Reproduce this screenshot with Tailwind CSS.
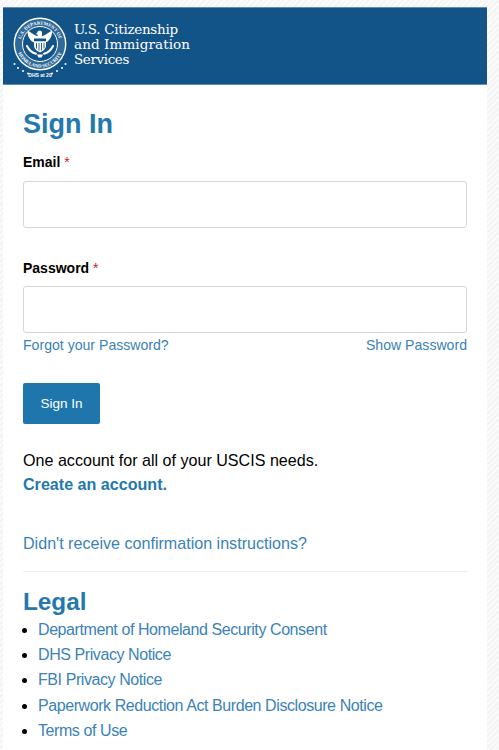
<!DOCTYPE html>
<html lang="en">

<head>
    <meta charset="UTF-8" />
    <title>Sign In</title>
    <script src="https://cdn.jsdelivr.net/npm/@tailwindcss/browser@4"></script>
</head>

<body class="h-[750px] overflow-hidden bg-[repeating-linear-gradient(135deg,#f4f4f4_0px,#f4f4f4_2px,#fbfbfb_2px,#fbfbfb_4px)] font-['Liberation_Sans',Arial,sans-serif]">
    <div class="ml-[3px] w-[484px] pt-[7px]">
        <header class="flex h-[78px] items-start border-y border-y-[#5b8db8] bg-[#135488] pl-[9px] pt-[6px]">
            <svg class="h-[66px] w-[56px] shrink-0" viewBox="0 0 56 66">
                <circle cx="28" cy="30" r="25.700" fill="#2f6a99" stroke="#fff" stroke-width="1.400" />
                <circle cx="28" cy="30" r="17.500" fill="#135488" stroke="#fff" stroke-width="1" />
                <defs>
                    <path id="ringTop" d="M8.500 30a19.500 19.500 0 0 1 39 0" />
                    <path id="ringBottom" d="M4.500 30a23.500 23.500 0 0 0 47 0" />
                </defs>
                <text font-size="4.800" font-weight="700" fill="#fff" font-family="Liberation Serif, serif"><textPath href="#ringTop" startOffset="50%" text-anchor="middle">U.S. DEPARTMENT OF</textPath></text>
                <text font-size="4.800" font-weight="700" fill="#fff" font-family="Liberation Serif, serif"><textPath href="#ringBottom" startOffset="50%" text-anchor="middle">HOMELAND SECURITY</textPath></text>
                <!-- eagle -->
                <path d="M28 16.500c-1.600 0-2.800 1-2.800 2.400l-1.700 1 1.900.3.400 2-3.200-1.300-7-4.400c-.4 4.600 1.200 8.500 4.400 10.900l3.200 1.600v-.9h9.200v.9l3.200-1.600c3.200-2.400 4.800-6.300 4.400-10.900l-7 4.400-3.200 1.300.3-3.300c0-1.400-1-2.400-2.300-2.400z" fill="#fff" />
                <path d="M22 24.500h12v7c0 3.200-2.700 5.300-6 7-3.300-1.700-6-3.800-6-7z" fill="#fff" />
                <path d="M22 24.500h12v2.800h-12z" fill="#135488" />
                <path d="M24.500 29v5.500M27 29v7.500M29.500 29v7.500M32 29v5.500" fill="none" stroke="#135488" stroke-width="0.900" />
                <path d="M15 32c2 4 5 6.800 9 7.800M41 32c-2 4-5 6.800-9 7.800" fill="none" stroke="#fff" stroke-width="2" stroke-linecap="round" />
                <path d="M25 40.500h6l-1.500 3h-3z" fill="#fff" />
                <!-- stars and motto -->
                <g fill="#fff">
                    <circle cx="2.500" cy="50" r="1" />
                    <circle cx="6" cy="54" r="1" />
                    <circle cx="11" cy="57" r="1" />
                    <circle cx="16" cy="59.500" r="1" />
                    <circle cx="40" cy="59.500" r="1" />
                    <circle cx="45" cy="57" r="1" />
                    <circle cx="50" cy="54" r="1" />
                    <circle cx="53.500" cy="50" r="1" />
                </g>
                <text x="28" y="63" text-anchor="middle" font-size="5" font-weight="700" fill="#fff" font-family="Liberation Sans, sans-serif">DHS at 20</text>
            </svg>
            <div class="ml-[6px] pt-[8px] font-['DejaVu_Serif',serif] text-[13.500px] leading-[15px] text-white">
                <div class="tracking-[-0.300px]">U.S. Citizenship</div>
                <div class="tracking-[0.100px]">and Immigration</div>
                <div class="tracking-[-0.400px]">Services</div>
            </div>
        </header>

        <main class="h-[665px] bg-white px-5 pt-5">
            <h1 class="text-[27px] leading-[38px] font-bold text-[#2378ae]">Sign In</h1>

            <form class="mt-[9px]">
                <label class="block text-sm leading-5 font-bold text-black">Email <span class="font-normal text-[#cd2026]">*</span></label>
                <input type="text" class="mt-[9px] block h-[47px] w-full rounded-[3px] border border-[#d6d6d6] bg-white" />

                <label class="mt-[30px] block text-sm leading-5 font-bold text-black">Password <span class="font-normal text-[#cd2026]">*</span></label>
                <input type="password" class="mt-[8px] block h-[47px] w-full rounded-[3px] border border-[#d6d6d6] bg-white" />

                <div class="mt-[2px] flex justify-between text-[14.100px] leading-5 text-[#3a82b8]">
                    <a href="#">Forgot your Password?</a>
                    <a href="#">Show Password</a>
                </div>

                <button type="button" class="mt-[28px] block h-[41px] w-[77px] rounded-[2px] bg-[#1f76ad] pt-px text-[13.500px] text-white">Sign In</button>
            </form>

            <p class="mt-[24px] text-[16.100px] leading-6 text-black">One account for all of your USCIS needs.</p>
            <a href="#" class="block text-[16.100px] leading-6 font-bold text-[#2378ae]">Create an account.</a>

            <a href="#" class="mt-[35px] block text-[16.100px] leading-6 text-[#3a82b8]">Didn't receive confirmation instructions?</a>

            <hr class="mt-[16px] border-t border-[#eeeeee]" />

            <h2 class="mt-[14px] text-[24.300px] leading-[31px] font-bold text-[#2378ae]">Legal</h2>
            <ul class="list-disc pl-[15px] text-base leading-[25.200px] tracking-[-0.420px] text-[#3a82b8] marker:text-black">
                <li><a href="#">Department of Homeland Security Consent</a></li>
                <li><a href="#">DHS Privacy Notice</a></li>
                <li><a href="#">FBI Privacy Notice</a></li>
                <li><a href="#">Paperwork Reduction Act Burden Disclosure Notice</a></li>
                <li><a href="#">Terms of Use</a></li>
            </ul>
        </main>
    </div>
</body>

</html>
